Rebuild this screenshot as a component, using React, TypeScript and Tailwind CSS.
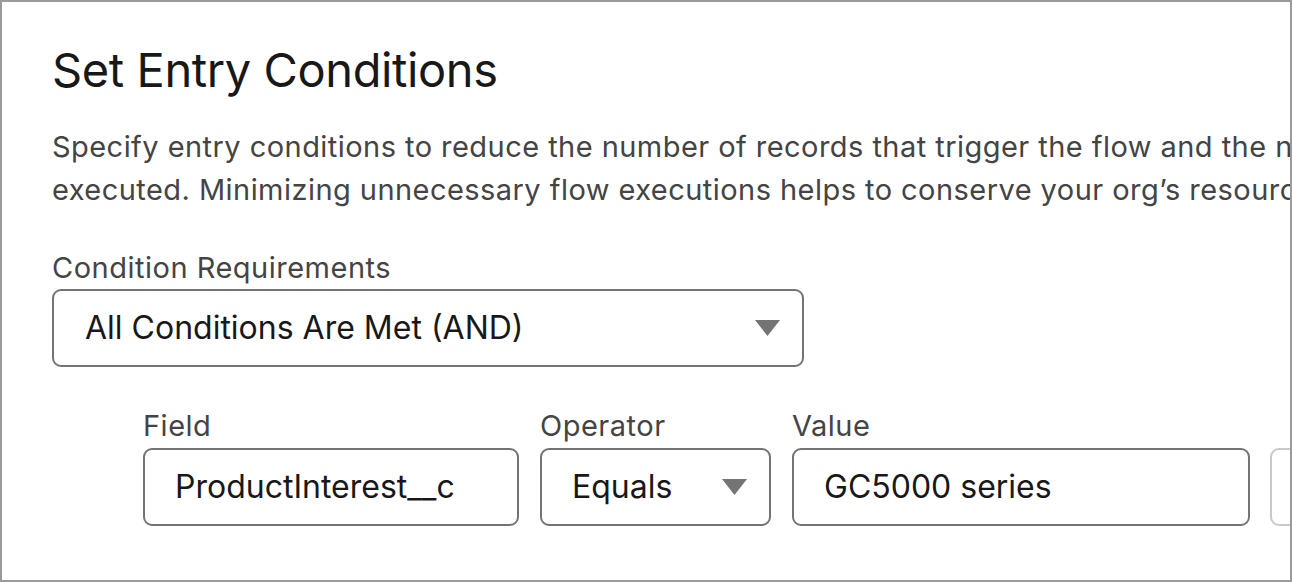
import React from "react";

const Tri = () => (
  <svg width="25" height="16" viewBox="0 0 25 16" className="shrink-0">
    <polygon points="0,0 25,0 12.5,16" fill="#747474" />
  </svg>
);

const label = "text-[29px] leading-[36px] tracking-[0.5px] text-[#444444]";
const val = "text-[32px] text-[#181818]";

export default function App() {
  return (
    <div
      className="w-[1292px] h-[582px] border-2 border-[#9a9a9a] bg-white overflow-hidden"
      style={{ fontFamily: "Inter, 'Noto Sans', sans-serif" }}
    >
      <div className="pl-[50px] pt-[40px] w-[1500px]">
        <h1 className="text-[47px] leading-[56px] text-[#181818] tracking-[-0.4px]">
          Set Entry Conditions
        </h1>
        <p className="mt-[27px] text-[29px] leading-[43px] tracking-[0.45px] text-[#444444] whitespace-nowrap">
          Specify entry conditions to reduce the number of records that trigger the flow and the number of times the flow is
          <br />
          executed. Minimizing unnecessary flow executions helps to conserve your org’s resources.
        </p>
        <div className={"mt-[39px] " + label}>Condition Requirements</div>
        <div className="mt-[3px] w-[752px] h-[78px] border-2 border-[#747474] rounded-[9px] flex items-center justify-between pl-[31px] pr-[22px]">
          <span className={val}>All Conditions Are Met (AND)</span>
          <Tri />
        </div>
        <div className="mt-[41px] ml-[91px] flex gap-[21px]">
          <div className="flex flex-col">
            <div className={label}>Field</div>
            <div className="mt-[4px] w-[376px] h-[78px] border-2 border-[#747474] rounded-[9px] flex items-center pl-[30px]">
              <span className={val}>ProductInterest__c</span>
            </div>
          </div>
          <div className="flex flex-col">
            <div className={label}>Operator</div>
            <div className="mt-[4px] w-[231px] h-[78px] border-2 border-[#747474] rounded-[9px] flex items-center justify-between pl-[30px] pr-[22px]">
              <span className={val}>Equals</span>
              <Tri />
            </div>
          </div>
          <div className="flex flex-col">
            <div className={label}>Value</div>
            <div className="mt-[4px] w-[458px] h-[78px] border-2 border-[#747474] rounded-[9px] flex items-center pl-[30px]">
              <span className={val}>GC5000 series</span>
            </div>
          </div>
          <div className="flex flex-col ml-[-1px]">
            <div className={label + " text-transparent"}>.</div>
            <div className="mt-[4px] w-[100px] h-[78px] border-2 border-[#c9c9c9] rounded-[9px]" />
          </div>
        </div>
      </div>
    </div>
  );
}
